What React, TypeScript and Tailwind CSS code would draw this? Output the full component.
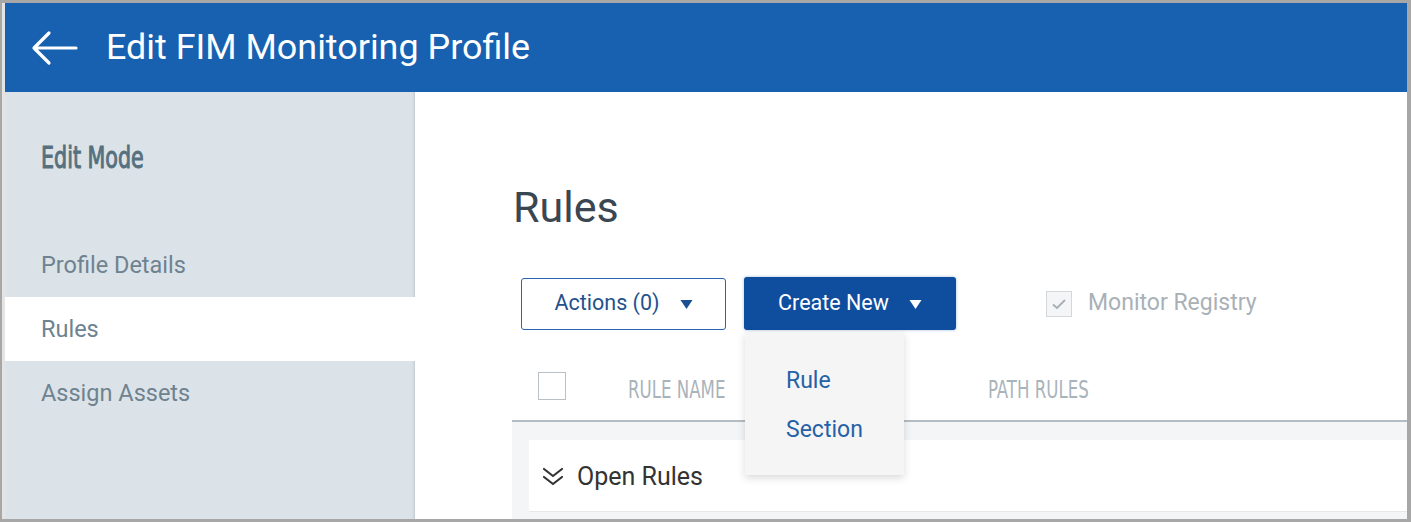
const sans = "font-['Roboto','Liberation_Sans',sans-serif]";
const cond = "font-['DejaVu_Sans_Condensed','DejaVu_Sans',sans-serif]";

function Caret({ className }: { className?: string }) {
  return (
    <svg width="13" height="11" viewBox="0 0 13 11" className={className}>
      <path d="M0.5 1 L12.5 1 L6.5 10 Z" fill="currentColor" />
    </svg>
  );
}

function Sidebar() {
  const items = ["Profile Details", "Rules", "Assign Assets"];
  return (
    <aside className="w-[410px] shrink-0 bg-[#dce3e8] shadow-[inset_-3px_0_3px_-2px_rgba(0,0,0,0.12)] flex flex-col">
      <div className="h-[141px] pl-[36px] pt-[47px]">
        <span
          className={`${cond} inline-block origin-left scale-x-[0.74] text-[31px] leading-[36px] text-[#56707f] [-webkit-text-stroke:1px_#56707f]`}
        >
          Edit Mode
        </span>
      </div>
      {items.map((item) => (
        <div
          key={item}
          className={`h-[64px] flex items-center pl-[36px] pt-[2px] ${sans} text-[23.5px] text-[#6e8290] ${
            item === "Rules" ? "bg-white" : ""
          }`}
        >
          {item}
        </div>
      ))}
    </aside>
  );
}

function Toolbar() {
  return (
    <div className={`flex items-center ${sans} pl-[8px]`}>
      <button className="w-[205px] h-[52px] border border-[#2a64ac] rounded-[3px] bg-white flex items-center justify-center gap-[20px] text-[21.5px] text-[#24528d]">
        <span>Actions (0)</span>
        <Caret className="text-[#1b4f94] mt-[2px]" />
      </button>
      <div className="relative ml-[18px]">
        <button className="w-[212px] h-[53px] rounded-[3px] bg-[#0f4e9f] flex items-center justify-center gap-[20px] text-[21.5px] text-white shadow-[0_0_3px_rgba(15,78,159,0.4)]">
          <span>Create New</span>
          <Caret className="text-white mt-[2px]" />
        </button>
        <div className="absolute left-[1px] top-[55px] w-[159px] h-[143px] bg-[#f5f5f5] shadow-[0_3px_8px_rgba(0,0,0,0.15)] z-10 flex flex-col pl-[41px] pt-[35px] gap-[21px] text-[23px] text-[#2561a8] leading-[28px]">
          <span>Rule</span>
          <span>Section</span>
        </div>
      </div>
      <label className="ml-[90px] flex items-center gap-[16px] text-[23px] text-[#a9b1b7]">
        <span className="w-[26px] h-[26px] border border-[#d3d8dc] bg-[#f3f5f6] flex items-center justify-center">
          <svg width="16" height="12" viewBox="0 0 16 12">
            <path d="M2 6.5 L6 10 L14 2" fill="none" stroke="#a6aeb4" strokeWidth="1.8" />
          </svg>
        </span>
        <span>Monitor Registry</span>
      </label>
    </div>
  );
}

function RulesTable() {
  return (
    <div className="mt-[22px] ml-[-1px]">
      <div className="h-[70px] flex items-center border-b-[2px] border-[#b3bcc2]">
        <span className="ml-[26px] w-[28px] h-[28px] border border-[#b9c0c5] bg-white" />
        <span
          className={`${cond} ml-[62px] pt-[7px] w-[360px] inline-block origin-left scale-x-[0.77] text-[24px] text-[#a9b3ba]`}
        >
          RULE NAME
        </span>
        <span
          className={`${cond} pt-[7px] inline-block origin-left scale-x-[0.77] text-[24px] text-[#a9b3ba]`}
        >
          PATH RULES
        </span>
      </div>
      <div className="bg-[#f4f5f6] h-[97px] pl-[17px] pt-[18px]">
        <div className="bg-white h-[72px] flex items-center pl-[13px] pt-[3px] gap-[13px] border-b border-[#e6e8ea]">
          <svg width="22" height="20" viewBox="0 0 22 20">
            <path
              d="M2 2 L11 9 L20 2 M2 10 L11 17 L20 10"
              fill="none"
              stroke="#333"
              strokeWidth="2.2"
              strokeLinecap="round"
              strokeLinejoin="round"
            />
          </svg>
          <span className={`${sans} text-[25px] text-[#333]`}>Open Rules</span>
        </div>
      </div>
    </div>
  );
}

export default function App() {
  return (
    <div className="w-[1411px] h-[522px] bg-[#a7a7a7] pt-[3px] pr-[4px] pb-[3px] pl-[2px] overflow-hidden">
      <div className="h-full bg-[#e4e4e4] pl-[3px] flex">
        <div className="flex-1 flex flex-col bg-white">
          <header className="h-[89px] shrink-0 bg-[#1761b0] flex items-center pl-[25px] gap-[28px]">
            <svg width="48" height="36" viewBox="0 0 48 36">
              <path
                d="M46 18 H4 M19 3 L4 18 L19 33"
                fill="none"
                stroke="white"
                strokeWidth="3.2"
                strokeLinecap="round"
                strokeLinejoin="round"
              />
            </svg>
            <h1 className={`${sans} text-[35.9px] text-white leading-none`}>Edit FIM Monitoring Profile</h1>
          </header>
          <div className="flex-1 flex min-h-0">
            <Sidebar />
            <main className="flex-1 bg-white pl-[98px] pt-[90px] min-w-0">
              <h2 className={`${sans} text-[43px] leading-[50px] text-[#3a4651]`}>Rules</h2>
              <div className="mt-[45px]">
                <Toolbar />
              </div>
              <RulesTable />
            </main>
          </div>
        </div>
      </div>
    </div>
  );
}
